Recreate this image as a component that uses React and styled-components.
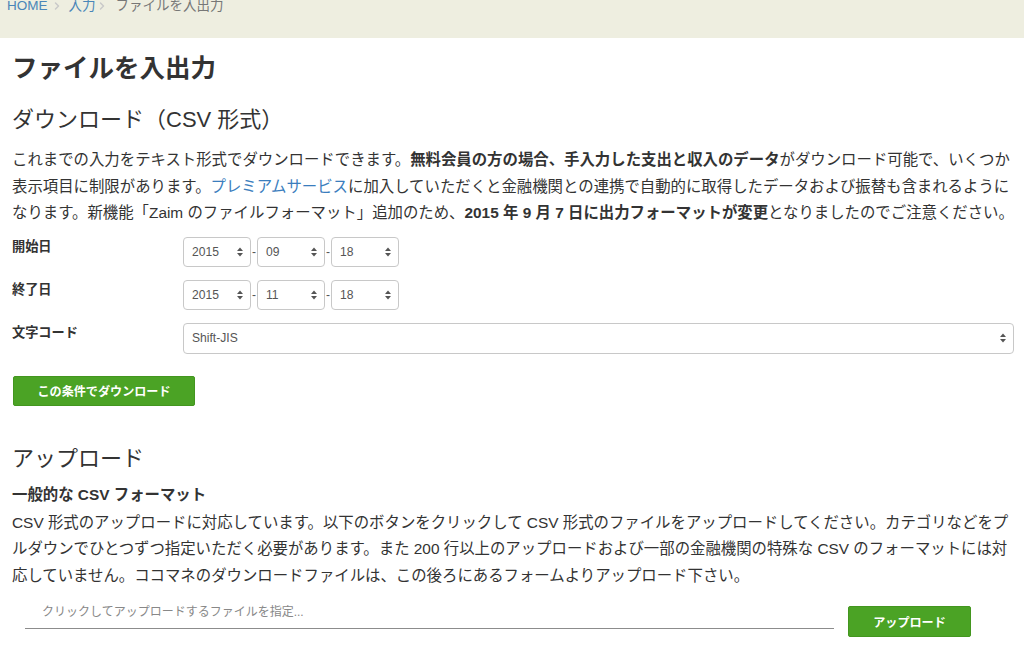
import React from 'react';
import styled, { createGlobalStyle } from 'styled-components';
import { ChevronRight } from 'lucide-react';

const GlobalStyle = createGlobalStyle`
  html, body {
    margin: 0;
    padding: 0;
    background: #fff;
  }
  body {
    font-family: "Liberation Sans", "Noto Sans CJK JP", sans-serif;
    color: #333;
    overflow: hidden;
  }
`;

const Crumbs = styled.nav`
  height: 38px;
  background: #eeeee0;
  overflow: hidden;
`;

const CrumbList = styled.ol`
  list-style: none;
  margin: -5px 0 0;
  padding: 0 0 0 7px;
  display: flex;
  align-items: center;
  height: 22px;
  font-size: 13.5px;
  line-height: 22px;
`;

const Crumb = styled.li`
  display: flex;
  align-items: center;
  color: ${props => (props.current ? '#777' : '#4a86b8')};

  svg {
    margin: ${props => (props.first ? '0 6px 0 3px' : '0 8px 0 0')};
    color: #c9c9c9;
  }
`;

const Main = styled.main`
  padding: 0 10px 0 12px;
`;

const Title = styled.h1`
  margin: 13px 0 0;
  font-size: 25.5px;
  line-height: 34px;
  font-weight: bold;
  color: #333;
`;

const SectionTitle = styled.h2`
  margin: ${props => (props.spaced ? '38px' : '20px')} 0 0;
  font-size: 22px;
  line-height: 30px;
  font-weight: normal;
  color: #333;
`;

const SubTitle = styled.h3`
  margin: 10px 0 0;
  font-size: 15.4px;
  line-height: 22px;
  font-weight: bold;
`;

const Para = styled.p`
  margin: ${props => (props.tight ? '4px' : '12px')} 0 0;
  font-size: 15.4px;
  line-height: 26.5px;

  a {
    color: #3a7dbd;
    text-decoration: none;
  }
`;

const Form = styled.form`
  margin-top: 10px;
  display: flex;
  flex-direction: column;
  gap: 13px;
`;

const FieldRow = styled.div`
  display: grid;
  grid-template-columns: 171px 1fr;
  align-items: start;
`;

const Label = styled.label`
  font-size: 13.2px;
  font-weight: bold;
  line-height: 18px;
  padding-top: 1px;
`;

const DateGroup = styled.div`
  display: flex;
  align-items: center;
`;

const Dash = styled.span`
  width: 6px;
  text-align: center;
  font-size: 12px;
  color: #555;
`;

const SelectBox = styled.div`
  box-sizing: border-box;
  width: ${props => props.width || '100%'};
  height: ${props => props.height || '30px'};
  padding: 0 7px 0 8px;
  display: flex;
  align-items: center;
  justify-content: space-between;
  border: 1px solid #c8c8c8;
  border-radius: 4px;
  background: #fff;
  font-size: 12.1px;
  color: #555;
`;

const Arrows = () => (
  <svg width="6" height="10" viewBox="0 0 6 10">
    <polygon points="0,4 3,0.5 6,4" fill="#555" />
    <polygon points="0,6 3,9.5 6,6" fill="#555" />
  </svg>
);

const Select = ({ value, width, height }) => (
  <SelectBox width={width} height={height}>
    <span>{value}</span>
    <Arrows />
  </SelectBox>
);

const GreenButton = styled.button`
  box-sizing: border-box;
  width: ${props => props.width};
  height: ${props => props.height || '30px'};
  margin: ${props => props.margin || '0'};
  padding: 0;
  border: 1px solid #43961f;
  border-radius: 2px;
  background: #4ba325;
  color: #fff;
  font-family: inherit;
  font-size: 12.1px;
  font-weight: bold;
  flex-shrink: 0;
`;

const UploadRow = styled.div`
  margin: 17px 0 0 13px;
  display: flex;
  align-items: flex-start;
`;

const FileField = styled.div`
  width: 792px;
  height: 17px;
  padding: 0 0 5px 17px;
  border-bottom: 1px solid #8c8c8c;
  font-size: 12px;
  line-height: 12px;
  color: #888;
`;

const DateField = ({ label, year, month, day }) => (
  <FieldRow>
    <Label>{label}</Label>
    <DateGroup>
      <Select value={year} width="68px" />
      <Dash>-</Dash>
      <Select value={month} width="68px" />
      <Dash>-</Dash>
      <Select value={day} width="68px" />
    </DateGroup>
  </FieldRow>
);

const App = () => (
  <>
    <GlobalStyle />
    <Crumbs>
      <CrumbList>
        <Crumb>HOME</Crumb>
        <Crumb first><ChevronRight size={12} strokeWidth={3} /></Crumb>
        <Crumb>入力</Crumb>
        <Crumb><ChevronRight size={12} strokeWidth={3} /></Crumb>
        <Crumb current>ファイルを入出力</Crumb>
      </CrumbList>
    </Crumbs>
    <Main>
      <Title>ファイルを入出力</Title>
      <SectionTitle>ダウンロード（CSV 形式）</SectionTitle>
      <Para>
        これまでの入力をテキスト形式でダウンロードできます。<b>無料会員の方の場合、手入力した支出と収入のデータ</b>がダウンロード可能で、いくつか表示項目に制限があります。<a href="#premium">プレミアムサービス</a>に加入していただくと金融機関との連携で自動的に取得したデータおよび振替も含まれるようになります。新機能「Zaim のファイルフォーマット」追加のため、<b>2015 年 9 月 7 日に出力フォーマットが変更</b>となりましたのでご注意ください。
      </Para>
      <Form>
        <DateField label="開始日" year="2015" month="09" day="18" />
        <DateField label="終了日" year="2015" month="11" day="18" />
        <FieldRow>
          <Label>文字コード</Label>
          <Select value="Shift-JIS" height="31px" />
        </FieldRow>
      </Form>
      <GreenButton type="button" width="182px" margin="22px 0 0 1px">
        この条件でダウンロード
      </GreenButton>
      <SectionTitle spaced>アップロード</SectionTitle>
      <SubTitle>一般的な CSV フォーマット</SubTitle>
      <Para tight>
        CSV 形式のアップロードに対応しています。以下のボタンをクリックして CSV 形式のファイルをアップロードしてください。カテゴリなどをプルダウンでひとつずつ指定いただく必要があります。また 200 行以上のアップロードおよび一部の金融機関の特殊な CSV のフォーマットには対応していません。ココマネのダウンロードファイルは、この後ろにあるフォームよりアップロード下さい。
      </Para>
      <UploadRow>
        <FileField>クリックしてアップロードするファイルを指定...</FileField>
        <GreenButton type="button" width="123px" height="31px" margin="0 0 0 14px">
          アップロード
        </GreenButton>
      </UploadRow>
    </Main>
  </>
);

export default App;
